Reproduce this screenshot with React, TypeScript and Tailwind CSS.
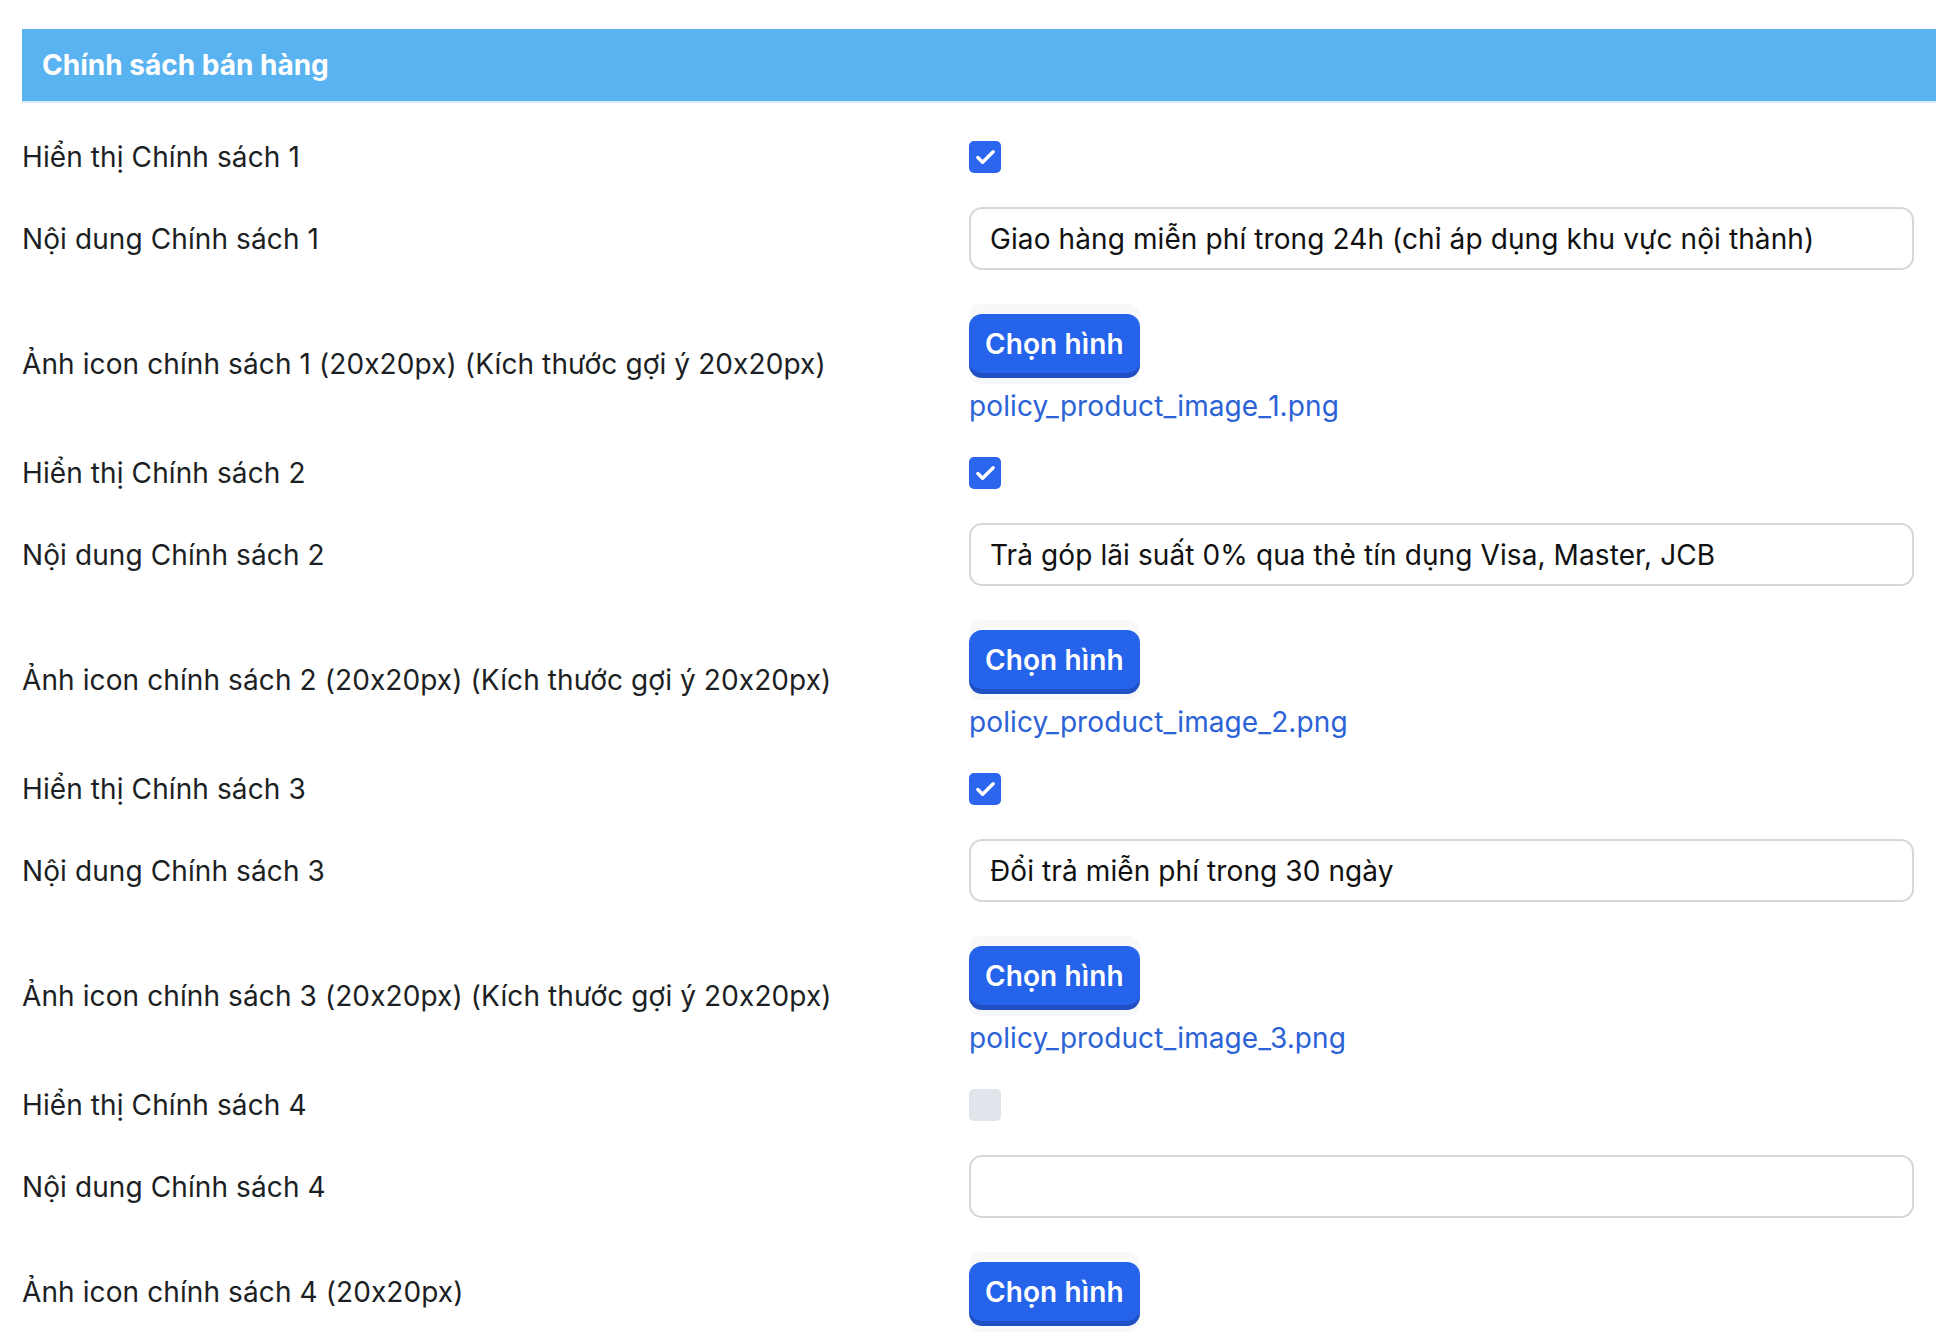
import { Check } from "lucide-react";

type Policy = {
  id: number;
  enabled: boolean;
  content: string;
  imageLabel: string;
  fileName?: string;
};

const policies: Policy[] = [
  {
    id: 1,
    enabled: true,
    content: "Giao hàng miễn phí trong 24h (chỉ áp dụng khu vực nội thành)",
    imageLabel: "Ảnh icon chính sách 1 (20x20px) (Kích thước gợi ý 20x20px)",
    fileName: "policy_product_image_1.png",
  },
  {
    id: 2,
    enabled: true,
    content: "Trả góp lãi suất 0% qua thẻ tín dụng Visa, Master, JCB",
    imageLabel: "Ảnh icon chính sách 2 (20x20px) (Kích thước gợi ý 20x20px)",
    fileName: "policy_product_image_2.png",
  },
  {
    id: 3,
    enabled: true,
    content: "Đổi trả miễn phí trong 30 ngày",
    imageLabel: "Ảnh icon chính sách 3 (20x20px) (Kích thước gợi ý 20x20px)",
    fileName: "policy_product_image_3.png",
  },
  {
    id: 4,
    enabled: false,
    content: "",
    imageLabel: "Ảnh icon chính sách 4 (20x20px)",
  },
];

function Checkbox({ checked }: { checked: boolean }) {
  return checked ? (
    <div className="flex h-[32px] w-[32px] items-center justify-center rounded-[5px] bg-[#2c66ee]">
      <Check className="h-[23px] w-[23px] text-white" strokeWidth={3.5} />
    </div>
  ) : (
    <div className="h-[32px] w-[32px] rounded-[5px] bg-[#e1e4ea]" />
  );
}

function PolicyBlock({ p }: { p: Policy }) {
  return (
    <>
      <div className="flex h-[32px] items-center">Hiển thị Chính sách {p.id}</div>
      <div className="flex h-[32px] items-center">
        <Checkbox checked={p.enabled} />
      </div>

      <div className="flex h-[63px] items-center">Nội dung Chính sách {p.id}</div>
      <div className="flex h-[63px] items-center rounded-[13px] border-2 border-[#d5d7db] bg-white px-[19px] text-[#111111]">
        {p.content}
      </div>

      <div className="flex items-center">{p.imageLabel}</div>
      <div className="flex flex-col items-start">
        <div className="rounded-[12px] bg-[#f7f8fa] pt-[10px] pb-[11px]">
          <button className="h-[59px] rounded-[13px] bg-[#2563eb] px-[16px] font-semibold text-white shadow-[0_5px_0_#1f4fc2]">
            Chọn hình
          </button>
        </div>
        {p.fileName && (
          <a className="mt-[5px] leading-[34px] text-[#2b62d6]" href="#">
            {p.fileName}
          </a>
        )}
      </div>
    </>
  );
}

export default function App() {
  return (
    <div className="min-h-screen bg-white pt-[29px] font-['Inter',sans-serif] text-[28px] text-[#1c1f24] [font-feature-settings:'calt'_0]">
      <div className="ml-[22px] flex h-[74px] items-center border-b-2 border-[#dde9f5] bg-[#59b3f0] pl-[20px] text-[28px] font-bold text-white">
        Chính sách bán hàng
      </div>
      <div className="grid grid-cols-[947px_1fr] gap-y-[34px] pl-[22px] pr-[22px] pt-[38px] pb-[20px] tracking-[0.1px]">
        {policies.map((p) => (
          <PolicyBlock key={p.id} p={p} />
        ))}
      </div>
    </div>
  );
}
